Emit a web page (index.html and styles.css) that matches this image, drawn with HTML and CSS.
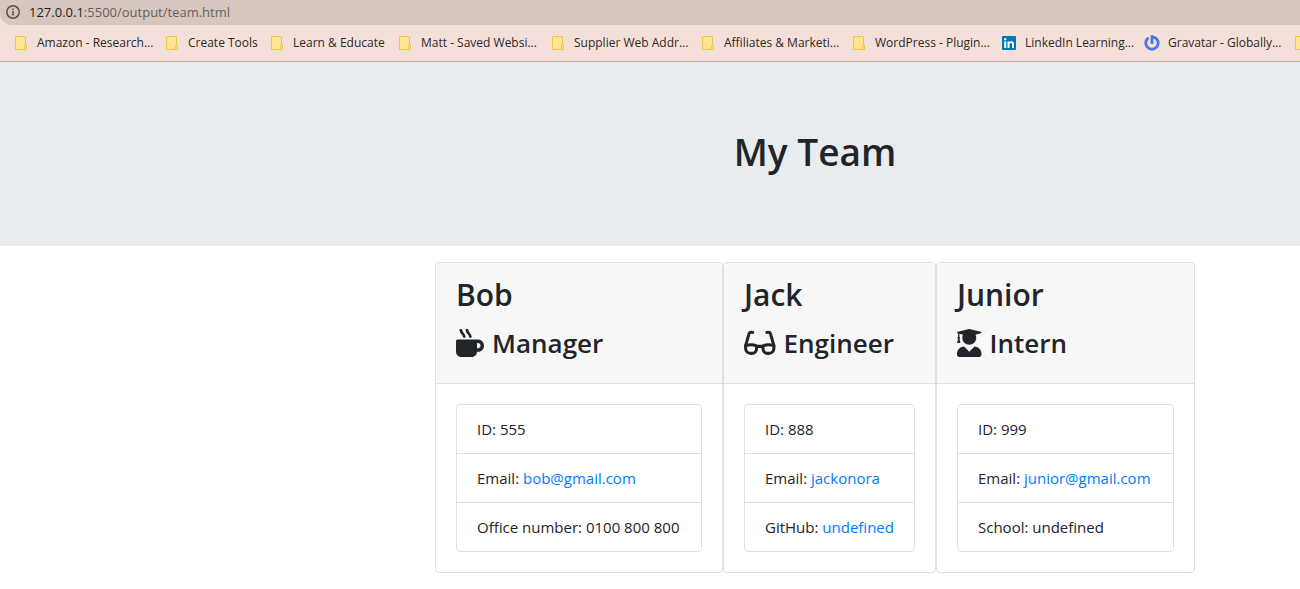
FILE: index.html
```html
<!DOCTYPE html>
<html lang="en">
<head>
<meta charset="utf-8">
<title>My Team</title>
<link rel="stylesheet" href="styles.css">
</head>
<body>
<svg class="defs" aria-hidden="true">
  <symbol id="folder" viewBox="0 0 14 14"><path d="M1.500.5h10v9h1v4h-11z" fill="#ffe58f" stroke="#edc746"/><path d="M10.500 13.500v-4h2v4z" fill="#ffe58f" stroke="#edc746"/></symbol>
</svg>
<div class="browser">
  <div class="address">
    <svg class="info" viewBox="0 0 14 14" aria-hidden="true"><circle cx="7" cy="7" r="6.200" fill="none" stroke="#55504e" stroke-width="1.500"/><path d="M6.200 6h1.600v4.500H6.200zM6.200 3.400h1.600V5H6.200z" fill="#55504e"/></svg>
    <span><span class="host">127.0.0.1</span>:5500/output/team.html</span>
  </div>
  <nav class="bookmarks" aria-label="Bookmarks">
    <a href="#"><svg viewBox="0 0 14 14"><use href="#folder"/></svg><span>Amazon - Research...</span></a>
    <a href="#"><svg viewBox="0 0 14 14"><use href="#folder"/></svg><span>Create Tools</span></a>
    <a href="#"><svg viewBox="0 0 14 14"><use href="#folder"/></svg><span>Learn &amp; Educate</span></a>
    <a href="#"><svg viewBox="0 0 14 14"><use href="#folder"/></svg><span>Matt - Saved Websi...</span></a>
    <a href="#"><svg viewBox="0 0 14 14"><use href="#folder"/></svg><span>Supplier Web Addr...</span></a>
    <a href="#"><svg viewBox="0 0 14 14"><use href="#folder"/></svg><span>Affiliates &amp; Marketi...</span></a>
    <a href="#"><svg viewBox="0 0 14 14"><use href="#folder"/></svg><span>WordPress - Plugin...</span></a>
    <a href="#"><svg viewBox="0 0 14 14"><rect width="14" height="14" rx="1" fill="#0077b5"/><circle cx="3.200" cy="3.200" r="1.200" fill="#fff"/><path d="M2.200 5.400h2V12h-2zM5.500 5.400h1.900v.9c.4-.7 1.100-1.100 2.100-1.100 1.900 0 2.500 1.200 2.500 3.200V12h-2V8.700c0-1-.2-1.700-1.100-1.700S7.500 7.700 7.500 8.700V12h-2z" fill="#fff"/></svg><span>LinkedIn Learning...</span></a>
    <a href="#"><svg class="gravatar" viewBox="0 0 16 16"><path d="M8 1.500v6.300M8 1.800A6.200 6.200 0 1 1 3.600 3.600" fill="none" stroke="#4678eb" stroke-width="2.800" stroke-linecap="round"/></svg><span>Gravatar - Globally...</span></a>
    <a href="#" aria-label="More bookmarks"><svg viewBox="0 0 14 14"><use href="#folder"/></svg></a>
  </nav>
</div>
<header class="jumbotron"><h1>My Team</h1></header>
<main class="team">
  <section class="card">
    <div class="card-header">
      <h2>Bob</h2>
      <h3><svg class="icon" viewBox="0 0 512 512" aria-hidden="true"><path d="M127.100 146.500c1.300 7.700 8 13.500 16 13.500h16.500c9.800 0 17.600-8.500 16.300-18-3.800-28.200-16.400-54.200-36.600-74.700-14.400-14.700-23.600-33.300-26.400-53.500C111.800 5.900 105 0 96.800 0H80.400C70.600 0 63 8.500 64.100 18c3.900 31.900 18 61.300 40.600 84.400 12 12.200 19.700 27.500 22.400 44.100zm112 0c1.300 7.700 8 13.500 16 13.500h16.500c9.800 0 17.600-8.500 16.300-18-3.800-28.200-16.400-54.200-36.600-74.700-14.400-14.700-23.600-33.300-26.400-53.500C223.800 5.900 217 0 208.800 0h-16.400c-9.800 0-17.500 8.500-16.300 18 3.900 31.900 18 61.300 40.600 84.400 12 12.200 19.700 27.500 22.400 44.100zM400 192H32c-17.700 0-32 14.300-32 32v192c0 53 43 96 96 96h192c53 0 96-43 96-96h16c61.800 0 112-50.200 112-112s-50.200-112-112-112zm0 160h-16v-96h16c26.500 0 48 21.500 48 48s-21.500 48-48 48z"/></svg>Manager</h3>
    </div>
    <div class="card-body">
      <ul>
        <li>ID: 555</li>
        <li>Email: <a href="mailto:bob@gmail.com">bob@gmail.com</a></li>
        <li>Office number: 0100 800 800</li>
      </ul>
    </div>
  </section>
  <section class="card">
    <div class="card-header">
      <h2>Jack</h2>
      <h3><svg class="icon" viewBox="0 0 576 512" aria-hidden="true"><g fill="none" stroke="currentColor" stroke-width="56" stroke-linecap="round" stroke-linejoin="round"><path d="M158 62c-34-12-62 4-70 36L30 304M418 62c34-12 62 4 70 36l58 206"/><path d="M30 304c62-22 142-20 200 4v42c0 56-36 96-88 96h-20c-52 0-92-38-92-90zM546 304c-62-22-142-20-200 4v42c0 56 36 96 88 96h20c52 0 92-38 92-90zM230 318h116"/></g></svg>Engineer</h3>
    </div>
    <div class="card-body">
      <ul>
        <li>ID: 888</li>
        <li>Email: <a href="mailto:jackonora">jackonora</a></li>
        <li>GitHub: <a href="#">undefined</a></li>
      </ul>
    </div>
  </section>
  <section class="card">
    <div class="card-header">
      <h2>Junior</h2>
      <h3><svg class="icon" viewBox="0 0 448 512" aria-hidden="true"><path d="M319.400 320.600L224 416l-95.400-95.400C57.100 323.700 0 382.200 0 454.400v9.600c0 26.500 21.500 48 48 48h352c26.500 0 48-21.500 48-48v-9.600c0-72.200-57.100-130.700-128.600-133.800zM13.600 79.800l6.400 1.500v58.400c-7 4.200-12 11.500-12 20.300 0 8.400 4.600 15.400 11.100 19.700L3.500 242c-1.700 6.900 2.100 14 7.600 14h41.800c5.500 0 9.300-7.100 7.600-14l-15.600-62.300C51.400 175.400 56 168.400 56 160c0-8.800-5-16.100-12-20.300V87.100l66 15.900c-8.600 17.200-14 36.400-14 57 0 70.700 57.300 128 128 128s128-57.300 128-128c0-20.600-5.300-39.800-14-57l96.300-23.200c18.200-4.400 18.200-27.100 0-31.500l-190.400-46c-13-3.100-26.700-3.100-39.700 0L13.600 48.200c-18.100 4.400-18.100 27.200 0 31.600z"/></svg>Intern</h3>
    </div>
    <div class="card-body">
      <ul>
        <li>ID: 999</li>
        <li>Email: <a href="mailto:junior@gmail.com">junior@gmail.com</a></li>
        <li>School: undefined</li>
      </ul>
    </div>
  </section>
</main>
</body>
</html>
```
FILE: styles.css
```css
* { box-sizing: border-box; }
body {
  margin: 0;
  background: #fff;
  color: #212529;
  font: 15px/24px "Open Sans", "Noto Sans", sans-serif;
  overflow-x: hidden;
}
a { color: #007bff; text-decoration: none; }
.defs { display: none; }

.browser { background: #f5e0d9; border-bottom: 1px solid #c4b2ac; }
.address {
  display: flex;
  align-items: center;
  gap: 9px;
  height: 25px;
  padding: 0 6px 2px;
  background: #d7c6be;
  border-bottom-left-radius: 12px;
  color: #66605d;
  font-size: 13px;
}
.host { color: #24211f; }
.info { width: 14px; height: 14px; }
.bookmarks {
  display: grid;
  grid-template-columns: 151px 105px 128px 153px 150px 151px 150px 143px 149px 14px;
  align-items: center;
  height: 36px;
  padding-left: 14px;
  overflow: hidden;
}
.bookmarks a {
  display: flex;
  align-items: center;
  gap: 9px;
  color: #2c2827;
  font-size: 12px;
  line-height: 16px;
  white-space: nowrap;
}
.bookmarks svg { flex: none; width: 14px; height: 14px; }
.bookmarks .gravatar { width: 16px; height: 16px; margin: 0 -1px; }

.jumbotron {
  padding: 64px 0 64px 330px;
  background: #e9ecef;
  text-align: center;
}
h1, h2, h3 { margin: 0 0 8px; font-weight: 600; }
h1 { font-size: 37px; line-height: 52px; margin-bottom: 4px; }
h2 { font-size: 30px; line-height: 40px; }
h3 { display: flex; align-items: center; gap: 8px; font-size: 26px; line-height: 40px; }
.icon { height: 28px; fill: currentColor; }

.team {
  display: grid;
  grid-template-columns: 288px 213px 259px;
  justify-content: center;
  padding: 16px 0 16px 330px;
}
.card { border: 1px solid #dfdfdf; border-radius: 4px; overflow: hidden; }
.card-header { padding: 12px 20px; background: #f7f7f7; border-bottom: 1px solid #dfdfdf; }
.card-body { padding: 20px; }
.card ul {
  margin: 0;
  padding: 0;
  list-style: none;
  border: 1px solid #dfdfdf;
  border-radius: 4px;
}
.card li { padding: 12px 0 12px 20px; white-space: nowrap; }
.card li + li { border-top: 1px solid #dfdfdf; }
```
